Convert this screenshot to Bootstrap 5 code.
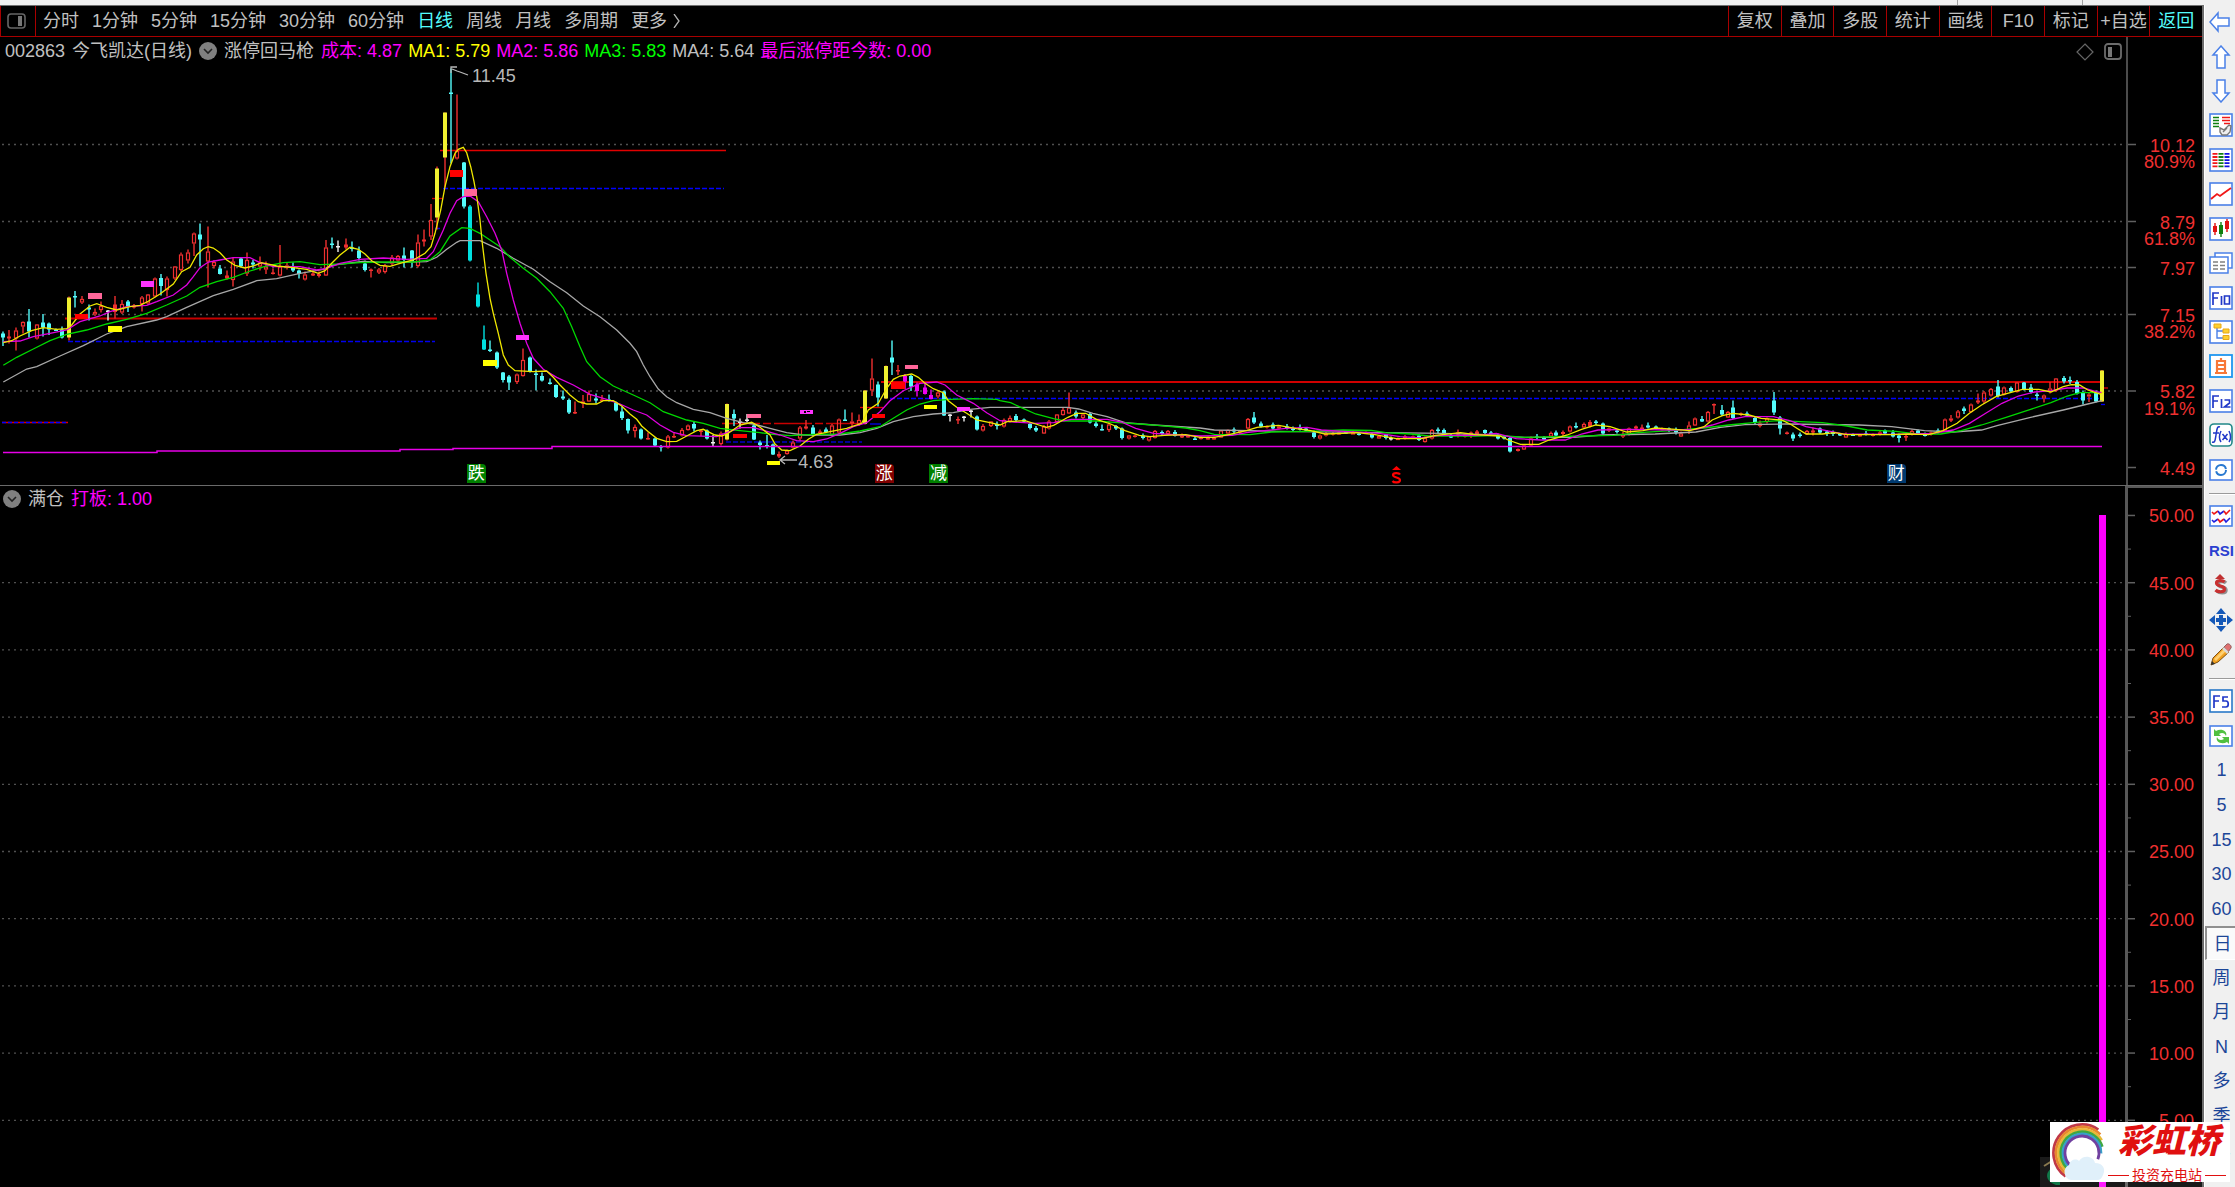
<!DOCTYPE html>
<html lang="zh-CN">
<head>
<meta charset="utf-8">
<meta name="viewport" content="width=device-width, initial-scale=1">
<title>今飞凯达 002863 日线</title>
<link rel="stylesheet" href="https://cdn.jsdelivr.net/npm/bootstrap@5.3.0/dist/css/bootstrap.min.css">
<style>
  body { background: #f0f0f0; font-family: "Liberation Sans", "Noto Sans CJK SC", sans-serif; font-size: 18px; line-height: 28px; color: #c0c0c0; }
  svg { display: block; }
  .top-strip { height: 5px; }
  .strip-a { flex: 1959 1 0; border-right: 1px solid #a0a0a0; }
  .strip-b { flex: 124 1 0; border-right: 1px solid #a0a0a0; }
  .strip-c { flex: 152 1 0; }
  .terminal { background: #000; border-right: 2px solid #6c6c6c; border-top: 1px solid #707070; }
  .menu-bar { height: 31px; border-bottom: 1px solid #a80000; }
  .layout-btn { width: 36px; border: 0; border-left: 1px solid #a80000; border-right: 1px solid #a80000; background: none; padding: 0 0 0 6px; }
  .period-list { gap: 13px; padding-left: 7px; }
  .flat { background: none; border: 0; padding: 0; color: #c0c0c0; text-decoration: none; white-space: nowrap; }
  .flat.on { color: #54fcfc; }
  .tool-list { width: 474px; }
  .tool-list .flat { flex: 1 1 0; min-width: 0; border-left: 1px solid #a80000; text-align: center; }
  .legend-row { height: 28px; padding-left: 5px; gap: 7px; white-space: nowrap; }
  .legend-row.sub { padding-left: 3px; height: 26px; }
  .legend-vals { gap: 6px; }
  .mg { color: #f0f; } .ye { color: #ff0; } .gr { color: #0f0; }
  .toggle-dot { width: 18px; height: 18px; border: 0; padding: 0; border-radius: 50%; background: #808080; }
  .plot-main { height: 420px; }
  .pane-main { border-bottom: 1px solid #6a6a6a; }
  .axis { width: 76px; border-left: 2px solid #4c4c4c; }
  .axis.low { border-left: 3px solid #585858; border-top: 2px solid #585858; width: 77px; }
  .axis text { fill: #f03030; font-size: 18px; text-anchor: end; }
  .pin { position: absolute; font-size: 17px; line-height: 19px; height: 19px; width: 19px; text-align: center; color: #fff; border-radius: 0 4px 0 0; overflow: hidden; }
  .note { position: absolute; line-height: 20px; color: #b8b8b8; }
  .pane-tools { position: absolute; top: 6px; right: 4px; gap: 10px; }
  .dock { width: 31px; border-left: 1px solid #fff; color: #1c4698; overflow: hidden; }
  .dock-group { padding-left: 4px; }
  .dock-group.g-a { height: 482px; }
  .dock-group.g-b { height: 173px; }
  .dock-group.g-c { height: 484px; }
  .dock-line { height: 2px; margin: 6px 0 4px 4px; background: #9a9a9a; border-bottom: 1px solid #fff; }
  .dock-btn { border: 0; background: none; padding: 0; width: 25px; height: 24px; line-height: 24px; color: #1c4698; text-align: center; white-space: nowrap; }
  .dock-btn.on { width: 30px; height: 34px; margin: -5px 0 -5px -4px; background: #fafafa; border-left: 2px solid #909090; border-top: 2px solid #909090; border-bottom: 1px solid #fff; padding-left: 3px; }
  .rsi { font-weight: 700; font-size: 15px; color: #2b3fd0; }
  .brand-box { position: fixed; right: 5px; bottom: 5px; width: 180px; height: 60px; background: #fff; color: #e01010; }
  .brand-back { position: fixed; right: 33px; bottom: 0; width: 162px; height: 30px; background: rgba(255,255,255,.1); }
  .brand-name { font-size: 34px; line-height: 38px; font-weight: 900; font-style: italic; }
  .brand-sub { font-size: 14px; line-height: 16px; gap: 3px; margin-top: 7px; }
  .brand-sub i { height: 1px; background: #e01010; flex: 1; }
</style>
<script src="https://cdn.jsdelivr.net/npm/bootstrap@5.3.0/dist/js/bootstrap.bundle.min.js"></script>
</head>
<body class="vh-100 d-flex flex-column overflow-hidden">
<div class="top-strip d-flex flex-shrink-0"><span class="strip-a"></span><span class="strip-b"></span><span class="strip-c"></span></div>
<div class="d-flex flex-grow-1 overflow-hidden">
  <main class="terminal d-flex flex-column flex-grow-1 overflow-hidden">
    <nav class="menu-bar d-flex flex-shrink-0 align-items-stretch">
      <button class="layout-btn" type="button" aria-label="布局"><svg width="20" height="16" viewBox="0 0 20 16"><rect x="1" y="1" width="17" height="14" rx="3" fill="none" stroke="#666" stroke-width="1.6"/><rect x="11" y="3" width="4" height="10" fill="#777"/></svg></button>
      <div class="period-list d-flex align-items-center flex-grow-1">
        <a class="flat" href="#">分时</a><a class="flat" href="#">1分钟</a><a class="flat" href="#">5分钟</a><a class="flat" href="#">15分钟</a><a class="flat" href="#">30分钟</a><a class="flat" href="#">60分钟</a><a class="flat on" href="#">日线</a><a class="flat" href="#">周线</a><a class="flat" href="#">月线</a><a class="flat" href="#">多周期</a><a class="flat d-flex align-items-center" href="#">更多<svg width="16" height="14" viewBox="0 0 16 14"><path d="M7 0l5 7-5 7" fill="none" stroke="#b0b0b0" stroke-width="1.3"/></svg></a>
      </div>
      <div class="tool-list d-flex">
        <button class="flat" type="button">复权</button><button class="flat" type="button">叠加</button><button class="flat" type="button">多股</button><button class="flat" type="button">统计</button><button class="flat" type="button">画线</button><button class="flat" type="button">F10</button><button class="flat" type="button">标记</button><button class="flat" type="button">+自选</button><button class="flat on" type="button">返回</button>
      </div>
    </nav>

    <section class="pane-main d-flex flex-shrink-0">
      <div class="flex-grow-1 position-relative overflow-hidden">
        <div class="legend-row d-flex align-items-center">
          <span>002863</span><span>今飞凯达(日线)</span>
          <button class="toggle-dot" type="button" aria-label="指标菜单"><svg width="18" height="18" viewBox="0 0 18 18"><path d="M5 7l4 4 4-4" fill="none" stroke="#222" stroke-width="1.6"/></svg></button>
          <span>涨停回马枪</span>
          <div class="legend-vals d-flex"><span class="mg">成本: 4.87</span><span class="ye">MA1: 5.79</span><span class="mg">MA2: 5.86</span><span class="gr">MA3: 5.83</span><span>MA4: 5.64</span><span class="mg">最后涨停距今数: 0.00</span></div>
        </div>
        <div class="pane-tools d-flex">
          <svg width="18" height="18" viewBox="0 0 18 18"><path d="M9 1l8 8-8 8-8-8z" fill="none" stroke="#666" stroke-width="1.2"/></svg>
          <svg width="18" height="18" viewBox="0 0 18 18"><rect x="1" y="1" width="16" height="15" rx="3" fill="none" stroke="#6c6c6c" stroke-width="1.8"/><rect x="4" y="4" width="4" height="10" fill="#777"/></svg>
        </div>
        <svg id="kline" class="plot-main w-100" viewBox="0 65 2126 420" preserveAspectRatio="none"></svg>
        <span class="note" style="left:22.2%;top:29px">11.45</span>
        <span class="note" style="left:37.55%;top:415px">4.63</span>
        <span class="pin" style="left:21.95%;top:427px;background:#008000">跌</span>
        <span class="pin" style="left:41.15%;top:427px;background:#800000">涨</span>
        <span class="pin" style="left:43.7%;top:427px;background:#008000">减</span>
        <span class="pin" style="left:88.75%;top:427px;background:#003a70">财</span>
      </div>
      <svg id="axisMain" class="axis flex-shrink-0" style="height:448px"></svg>
    </section>

    <section class="d-flex flex-grow-1 overflow-hidden">
      <div class="flex-grow-1 d-flex flex-column overflow-hidden">
        <div class="legend-row sub d-flex align-items-center flex-shrink-0">
          <button class="toggle-dot" type="button" aria-label="指标菜单"><svg width="18" height="18" viewBox="0 0 18 18"><path d="M5 7l4 4 4-4" fill="none" stroke="#222" stroke-width="1.6"/></svg></button>
          <span>满仓</span><span class="mg">打板: 1.00</span>
        </div>
        <svg id="signal" class="w-100 flex-grow-1" viewBox="0 512 2125 675" preserveAspectRatio="none"></svg>
      </div>
      <svg id="axisSub" class="axis low flex-shrink-0 h-100"></svg>
    </section>
  </main>

  <aside class="dock flex-shrink-0">
    <div class="dock-group g-a d-flex flex-column justify-content-around">
      <button class="dock-btn" type="button" aria-label="后退"><svg width="24" height="24" viewBox="0 0 24 24"><path d="M1 12L9 3v5h11v8H9v5z" fill="#fff" stroke="#4a80e8" stroke-width="1.5"/></svg></button>
      <button class="dock-btn" type="button" aria-label="上翻"><svg width="24" height="24" viewBox="0 0 24 24"><path d="M12 1l8 9h-4v13H8V10H4z" fill="#fff" stroke="#4a80e8" stroke-width="1.5"/></svg></button>
      <button class="dock-btn" type="button" aria-label="下翻"><svg width="24" height="24" viewBox="0 0 24 24"><path d="M12 23l8-9h-4V1H8v13H4z" fill="#fff" stroke="#4a80e8" stroke-width="1.5"/></svg></button>
      <button class="dock-btn" type="button" aria-label="报价设置"><svg width="24" height="24" viewBox="0 0 24 24"><rect x="1" y="1" width="22" height="22" fill="#fff" stroke="#4a80e8" stroke-width="1.6"/><path d="M4 4.500h6M4 7.500h6M4 10.500h6M4 13.500h6" stroke="#108010" stroke-width="1.6"/><path d="M13 4.500h8M13 7.500h8M15 10.500h6" stroke="#f01818" stroke-width="1.6"/><path d="M11 15l4 2 5-5 2 1-1 6-3 3h-5l-2-3z" fill="#eee" stroke="#777" stroke-width="1.4"/><path d="M14 19l4-4" fill="none" stroke="#777" stroke-width="1.3"/></svg></button>
      <button class="dock-btn" type="button" aria-label="行情列表"><svg width="24" height="24" viewBox="0 0 24 24"><rect x="1" y="1" width="22" height="22" fill="#fff" stroke="#4a80e8" stroke-width="1.6"/><g stroke-width="5" stroke-dasharray="1.800 1.300"><path d="M6 5v15" stroke="#f01818"/><path d="M12 5v15" stroke="#108010"/><path d="M18 5v15" stroke="#1010e0"/></g></svg></button>
      <button class="dock-btn" type="button" aria-label="分时走势"><svg width="24" height="24" viewBox="0 0 24 24"><rect x="1" y="1" width="22" height="22" fill="#fff" stroke="#4a80e8" stroke-width="1.6"/><path d="M2 17l6-5 3 2 4-3 7-5" fill="none" stroke="#f01818" stroke-width="1.8"/></svg></button>
      <button class="dock-btn" type="button" aria-label="K线"><svg width="24" height="24" viewBox="0 0 24 24"><rect x="1" y="1" width="22" height="22" fill="#fff" stroke="#4a80e8" stroke-width="1.6"/><path d="M6 6v12M18 2v13" stroke="#e01010" stroke-width="1.4"/><path d="M12 5v15" stroke="#108010" stroke-width="1.4"/><path d="M4 9h4v6H4zM16 4h4v8h-4z" fill="#e01010"/><path d="M10 8h4v9h-4z" fill="#108010"/></svg></button>
      <button class="dock-btn" type="button" aria-label="窗口"><svg width="24" height="24" viewBox="0 0 24 24"><path d="M6 2h17v15H6z" fill="#fff" stroke="#4a80e8" stroke-width="1.5"/><path d="M1 6h18v16H1z" fill="#fff" stroke="#4a80e8" stroke-width="1.5"/><path d="M4 11h5M11 11h5M4 14.500h5M11 14.500h5M4 18h5M11 18h5" stroke="#808080" stroke-width="1.6"/></svg></button>
      <button class="dock-btn" type="button" aria-label="F10"><svg width="24" height="24" viewBox="0 0 24 24"><rect x="1" y="1" width="22" height="22" fill="#fff" stroke="#4a80e8" stroke-width="1.6"/><path d="M4 19V7h6M4 12h5M12.500 10v9M15.500 10h5v8h-5z" fill="none" stroke="#2038c8" stroke-width="1.7"/></svg></button>
      <button class="dock-btn" type="button" aria-label="板块树"><svg width="24" height="24" viewBox="0 0 24 24"><rect x="1" y="1" width="22" height="22" fill="#fff" stroke="#4a80e8" stroke-width="1.6"/><path d="M8 7v11h6M8 11h6" fill="none" stroke="#4a80e8" stroke-width="1.4"/><path d="M5 4h7v4H5zM14 9h6v4h-6zM14 15.500h6v4h-6z" fill="#fcd030" stroke="#e8a818"/></svg></button>
      <button class="dock-btn" type="button" aria-label="自选"><svg width="24" height="24" viewBox="0 0 24 24"><rect x="1" y="1" width="22" height="22" fill="#fff" stroke="#1e96f0" stroke-width="1.8"/><path d="M12 4v3M8 7h8v12H8zM8 11h8M8 15h8M6 19h12" fill="none" stroke="#f87838" stroke-width="2.200"/></svg></button>
      <button class="dock-btn" type="button" aria-label="F12"><svg width="24" height="24" viewBox="0 0 24 24"><rect x="1" y="1" width="22" height="22" fill="#fff" stroke="#4a80e8" stroke-width="1.6"/><path d="M4 19V7h6M4 12h5M12.500 10v9M15.500 11h5v3l-5 4h6" fill="none" stroke="#2038c8" stroke-width="1.7"/></svg></button>
      <button class="dock-btn" type="button" aria-label="公式"><svg width="24" height="24" viewBox="0 0 24 24"><rect x="1" y="1" width="22" height="22" rx="4" fill="#fff" stroke="#208888" stroke-width="1.6"/><path d="M11 4c-3-1-3 2-4 8s-1 8-4 7M4 10h6M12 8c-2 4-2 8 0 11M20 8c2 4 2 8 0 11M13.500 11l5 6M18.500 11l-5 6" fill="none" stroke="#2038c8" stroke-width="1.5"/></svg></button>
      <button class="dock-btn" type="button" aria-label="循环"><svg width="24" height="24" viewBox="0 0 24 24"><rect x="1" y="2" width="22" height="20" fill="#fff" stroke="#4a80e8" stroke-width="1.6"/><circle cx="12" cy="12" r="5" fill="none" stroke="#2878d0" stroke-width="2" stroke-dasharray="14 1.700"/></svg></button>
    </div>
    <div class="dock-line"></div>
    <div class="dock-group g-b d-flex flex-column justify-content-around">
      <button class="dock-btn" type="button" aria-label="多图"><svg width="24" height="24" viewBox="0 0 24 24"><rect x="1" y="2" width="22" height="20" fill="#fff" stroke="#4a80e8" stroke-width="1.6"/><path d="M3 8l2 2 4-3" fill="none" stroke="#f01818" stroke-width="1.6"/><path d="M9 7l2 3 4-3" fill="none" stroke="#2020e0" stroke-width="1.6"/><path d="M15 7l2 3 4-4" fill="none" stroke="#f01818" stroke-width="1.6"/><path d="M3 16l2 2 4-3" fill="none" stroke="#2020e0" stroke-width="1.6"/><path d="M9 15l2 3 4-3" fill="none" stroke="#f01818" stroke-width="1.6"/><path d="M15 15l2 3 4-4" fill="none" stroke="#2020e0" stroke-width="1.6"/></svg></button>
      <button class="dock-btn rsi" type="button">RSI</button>
      <button class="dock-btn" type="button" aria-label="资金"><svg width="24" height="24" viewBox="0 0 24 24"><path d="M17 10c-2-2-8-2-8 1 0 4 8 2 8 6s-7 3-9 1" fill="none" stroke="#909090" stroke-width="3.500"/><path d="M6 6l5-5 5 5z" fill="#c03030"/><path d="M15.500 9c-2-2-8-2-8 1 0 4 8 2 8 6s-7 3-9 1" fill="none" stroke="#c83030" stroke-width="3.200"/></svg></button>
      <button class="dock-btn" type="button" aria-label="移动"><svg width="24" height="24" viewBox="0 0 24 24"><path d="M12 0l5 6H7zM12 24l5-6H7zM0 12l6-5v10zM24 12l-6-5v10z" fill="#1458b8"/><path d="M12 7v10M7 12h10" stroke="#1458b8" stroke-width="4"/></svg></button>
      <button class="dock-btn" type="button" aria-label="画笔"><svg width="24" height="24" viewBox="0 0 24 24"><path d="M2 22l2-7L15 4l5 5L9 19z" fill="#f0a020" stroke="#805010"/><path d="M5 16L16 5l2 2L7 18z" fill="#ffd070"/><path d="M15 4l3-3c2-1 5 2 4 4l-3 4z" fill="#e07070" stroke="#906060"/><path d="M14 5l5 5" stroke="#d8d8d8" stroke-width="2.500"/><path d="M2 22l1-4 3 3z" fill="#333"/></svg></button>
    </div>
    <div class="dock-line"></div>
    <div class="dock-group g-c d-flex flex-column justify-content-around">
      <button class="dock-btn" type="button" aria-label="F5"><svg width="24" height="24" viewBox="0 0 24 24"><rect x="1" y="1" width="22" height="22" fill="#fff" stroke="#2878c8" stroke-width="1.6"/><path d="M5 19V7h6M5 12h5M19 8h-5v4h3c3 0 3 6 0 6h-4" fill="none" stroke="#2038c8" stroke-width="1.7"/></svg></button>
      <button class="dock-btn" type="button" aria-label="刷新"><svg width="24" height="24" viewBox="0 0 24 24"><rect x="1" y="2" width="22" height="20" fill="#fff" stroke="#4a80e8" stroke-width="1.6"/><path d="M5 5v7h7l-2-2c3-2 6-1 7 2 2-5-5-8-10-5z" fill="#50c040"/><path d="M20 20v-7h-7l2 2c-3 2-6 1-7-2-2 5 5 8 10 5z" fill="#50c040"/></svg></button>
      <button class="dock-btn" type="button">1</button>
      <button class="dock-btn" type="button">5</button>
      <button class="dock-btn" type="button">15</button>
      <button class="dock-btn" type="button">30</button>
      <button class="dock-btn" type="button">60</button>
      <button class="dock-btn on" type="button">日</button>
      <button class="dock-btn" type="button">周</button>
      <button class="dock-btn" type="button">月</button>
      <button class="dock-btn" type="button">N</button>
      <button class="dock-btn" type="button">多</button>
      <button class="dock-btn" type="button">季</button>
      <button class="dock-btn" type="button">年</button>
    </div>
  </aside>
</div>

<div class="brand-back"><svg width="20" height="30" viewBox="0 0 20 30"><path d="M4 9l8-5" stroke="#8a7a50" stroke-width="2"/><path d="M12 11c-8 5-6 14 4 17h4V11z" fill="#107848"/></svg></div>
<div class="brand-box d-flex">
  <svg width="58" height="60" viewBox="0 0 58 60" class="flex-shrink-0">
    <g fill="none" stroke-width="2.800" transform="rotate(125 32 31)">
      <circle cx="32" cy="31" r="28.500" stroke="#c03848" pathLength="360" stroke-dasharray="180 360"/>
      <circle cx="32" cy="31" r="26" stroke="#e88830" pathLength="360" stroke-dasharray="190 360"/>
      <circle cx="32" cy="31" r="23.500" stroke="#e8b838" pathLength="360" stroke-dasharray="202 360"/>
      <circle cx="32" cy="31" r="21.200" stroke="#40a840" pathLength="360" stroke-dasharray="218 360"/>
      <circle cx="32" cy="31" r="19" stroke="#38a0c8" pathLength="360" stroke-dasharray="236 360"/>
      <circle cx="32" cy="31" r="17" stroke="#7040a0" pathLength="360" stroke-dasharray="256 360"/>
    </g>
    <path d="M21 58a8 8 0 0 1-2-15c1-5 7-7 10-4 4-7 15-5 16 2 8 0 11 6 8 12-1 3-3 5-6 5z" fill="#e0f0fa"/>
  </svg>
  <div class="flex-grow-1 overflow-hidden">
    <div class="brand-name text-center">彩虹桥</div>
    <div class="brand-sub d-flex align-items-center pe-1"><i></i>投资充电站<i></i></div>
  </div>
</div>

<script>
// Session blocks: origin x, origin y, x scale, y scale, candles.
// A candle is: centre, high, body top, body bottom, low, kind.
const blocks = [
 {o:[0,200,3,3], k:`10 395 400 412 438 c;28 390 410 416 430 R;47 382 392 416 452 r;69 365 366 380 400 r;88 327 364 395 413 c;110 372 374 415 418 r;128 342 367 382 410 c;146 368 370 388 405 c;168 386 388 390 392 c;187 380 388 412 416 c;208 290 292 412 422 y;226 273 288 290 322 c;245 288 297 307 312 r;267 313 323 328 362 c;286 325 336 344 348 r;304 305 318 330 338 r;325 330 332 334 362 w;344 288 314 336 355 R;366 300 312 338 342 r;385 300 305 318 336 c;403 312 316 322 326 R;425 288 292 312 334 r;443 282 284 310 314 r;465 233 236 290 292 r;484 222 234 258 286 c;502 230 236 270 290 r;524 198 200 235 240 r;542 157 163 210 215 r;565 148 158 182 190 r;583 98 100 130 168 r;601 70 103 118 200 c;624 80 154 184 262 r;641 180 186 198 206 r;659 195 206 222 224 c;681 212 226 236 238 R;700 172 184 240 260 r;722 172 175 198 203 c;740 158 180 220 228 r;759 180 188 194 205 c;781 170 188 200 212 r;799 184 200 208 222 r;820 205 218 221 224 R;839 135 200 226 230 r;860 188 196 202 208 r;880 188 200 212 216 c;898 208 212 222 236 c;915 215 224 238 242 r;938 210 220 226 228 R;956 214 222 228 232 R;979 120 142 226 228 r;997 112 130 134 145 c;1015 122 138 140 156 w;1037 116 134 142 148 R;1055 125 142 144 155 c;1077 140 152 174 182 c;1096 182 190 210 214 c;1114 205 208 210 232 R;1136 204 208 218 222 r;1154 192 196 216 220 r;1176 165 172 190 196 r;1195 165 168 182 190 r;1213 143 166 180 202 c;1235 150 152 184 202 c;1253 103 128 198 202 r;1271 88 118 124 140 R;1294 12 60 110 120 r`},
 {o:[400,50,3,3], k:`112 350 355 502 538 y;134 187 188 322 412 y;152 55 128 132 340 c;171 133 303 326 328 r;193 336 338 470 475 c;211 465 470 632 634 C;233 697 733 770 772 C;251 827 868 898 900 C;269 872 898 902 906 c;292 904 908 952 957 c;310 966 968 990 997 c;328 975 980 997 1020 c;350 970 974 996 1002 r;370 895 930 978 980 r;391 920 922 965 967 c;409 958 970 974 1022 c;427 967 978 992 994 c;449 985 998 1001 1004 c;467 1003 1005 1041 1044 c;489 1022 1040 1046 1050 c;508 1046 1050 1088 1092 c;526 1055 1086 1091 1092 R;548 1035 1055 1060 1074 r;566 1022 1032 1054 1056 r;589 1030 1046 1052 1060 c;607 1035 1048 1052 1055 R;626 1034 1048 1052 1055 c;648 1055 1058 1082 1084 c;665 1070 1084 1104 1110 c;684 1105 1107 1142 1151 c;706 1124 1131 1143 1163 r;724 1136 1138 1165 1168 c;745 1148 1164 1167 1168 R;765 1162 1165 1186 1188 c;782 1185 1188 1192 1204 c;805 1155 1160 1193 1195 r;823 1148 1158 1163 1164 R;845 1134 1140 1156 1160 r;863 1124 1126 1140 1142 r;882 1115 1122 1136 1144 c;904 1140 1142 1146 1158 R;922 1138 1142 1166 1168 c;940 1155 1176 1178 1188 w;962 1145 1151 1182 1187 r;980 1060 1062 1168 1172 y;1002 1078 1092 1106 1128 c;1021 1105 1115 1117 1135 w;1040 1092 1108 1110 1118 w;1062 1120 1126 1168 1170 c`},
 {o:[600,320,3,3], k:`480 362 367 375 388 c;502 345 375 378 385 c;520 370 373 403 405 c;538 395 402 410 414 R;561 388 391 402 404 r;580 362 368 382 386 r;601 318 322 355 362 r;619 300 320 326 328 R;638 315 322 342 348 c;659 328 334 338 342 R;677 323 328 336 338 c;696 312 316 346 350 r;718 295 298 338 342 r;736 268 298 300 300 c;757 278 305 310 320 r;776 283 300 312 318 r;795 210 211 312 314 y;817 115 176 212 228 r;835 184 193 232 260 c;858 136 138 235 237 y;876 62 112 128 165 c;894 135 150 155 165 R;915 162 168 185 207 m;934 165 168 200 213 c;952 188 193 213 230 m;974 188 203 222 224 m;992 208 225 237 238 m;1015 212 218 230 235 r;1033 212 215 286 288 c;1051 282 284 286 304 w;1074 290 297 302 312 R;1092 288 290 292 304 w;1114 270 272 276 292 w;1132 287 290 328 332 c;1150 312 318 332 335 r;1172 303 305 318 321 r;1190 305 312 318 328 c`},
 {o:[1000,360,2.8,3], k:`12 175 180 200 203 r;29 166 174 184 188 r;46 162 168 180 184 c;67 175 178 184 188 c;84 188 192 204 208 c;101 198 204 212 216 c;122 195 200 220 222 r;138 180 184 206 208 r;160 162 164 186 190 r;176 142 150 165 167 r;193 98 142 160 162 r;214 152 158 170 176 c;231 160 163 174 178 r;252 158 162 188 190 c;268 183 190 198 203 c;285 193 207 210 212 c;306 185 193 210 216 r;324 195 198 206 210 c;341 203 205 234 239 c;361 225 227 236 238 r;378 225 226 230 232 R;399 220 226 234 238 c;416 228 230 241 244 r;433 210 213 234 236 r;453 212 216 222 225 c;470 210 213 222 224 r;491 210 216 228 230 c;509 220 228 232 234 R;525 226 228 231 232 R;545 230 235 238 239 c;562 228 231 236 238 r;583 230 232 237 238 r;600 230 232 236 238 r;618 210 212 232 234 r;638 208 210 220 222 r;655 203 208 215 222 c;672 210 213 218 222 R;693 174 177 206 208 r;710 156 172 188 192 c;730 184 190 200 203 c;747 196 198 202 205 R;765 188 194 206 210 c;782 196 200 206 208 r;803 192 200 206 208 c;820 200 204 210 213 c;840 193 202 208 212 c;857 202 206 212 215 c;878 212 218 231 235 c;895 224 226 236 238 r;912 216 220 226 230 r;932 216 219 224 226 R;949 215 218 222 224 r;970 212 216 220 222 c;987 213 217 219 221 r;1004 216 220 222 226 c;1024 214 216 220 222 r;1042 218 222 233 235 c;1062 226 228 235 237 r;1080 222 224 234 238 c;1094 230 234 236 242 w;1115 232 234 238 240 r;1135 225 230 236 238 r;1155 226 230 234 236 r;1172 222 226 240 243 c;1189 230 234 246 248 r;1210 207 210 236 238 r;1226 202 208 210 220 c;1243 205 210 220 222 c;1264 222 228 230 234 c;1281 208 218 222 232 r;1302 220 224 230 232 r;1319 214 218 220 234 R;1336 210 214 222 224 R;1357 208 210 219 222 c;1374 213 217 221 224 c;1395 220 226 235 238 c;1412 225 231 236 238 c`},
 {o:[1500,360,2.45,3], k:`24 228 234 274 278 c;43 265 267 273 275 R;58 252 256 268 270 r;75 230 236 256 260 r;91 222 230 234 240 c;107 228 232 238 240 c;124 215 219 230 232 r;138 212 218 226 228 c;154 212 216 222 228 R;172 196 200 214 218 r;187 188 198 203 206 c;205 188 192 202 206 r;220 180 186 200 202 R;234 180 185 189 195 c;253 188 190 220 224 c;267 203 206 212 216 r;286 208 212 216 220 c;301 216 222 230 234 r;316 202 206 222 226 r;333 196 200 206 210 R;348 193 202 206 208 R;363 188 196 202 206 c;381 196 199 206 210 c;396 202 206 210 212 R;414 202 206 210 216 c;430 203 208 218 224 c;444 215 220 229 231 r;462 184 196 212 222 r;477 172 176 196 198 r;495 168 177 184 186 c;510 153 156 184 188 r;525 130 132 134 162 R;543 135 150 164 168 c;558 153 156 172 174 r;572 122 142 174 177 c;590 158 160 164 168 R;606 155 160 166 170 c;624 170 174 187 195 c;638 182 190 198 203 r;654 172 176 186 190 r;672 96 122 158 165 c;687 168 173 206 224 c;704 215 218 222 224 R;719 218 223 235 243 c;734 218 224 228 232 c;752 210 213 222 225 r;768 203 212 218 226 R;785 203 206 218 222 c;800 210 214 218 228 c;815 212 216 222 228 c;833 220 222 226 228 c;848 218 222 232 234 r;866 220 223 226 228 c;881 222 225 228 230 R;896 213 220 224 226 c;915 220 223 226 229 R;930 212 218 222 226 r;944 208 212 220 224 c;962 210 218 230 233 c;977 220 226 234 248 c;995 222 228 231 243 R;1010 208 213 222 226 r;1025 208 211 222 224 c;1042 218 222 228 230 c;1057 214 218 224 226 R;1072 206 212 216 220 c;1090 176 178 212 214 r;1105 165 175 180 186 r;1123 150 154 172 175 r;1138 140 145 153 162 c;1153 130 133 156 158 r;1171 100 122 128 132 R;1186 93 97 125 132 r;1204 84 87 106 110 r;1219 60 80 108 112 c;1234 80 83 104 106 r;1252 80 84 94 98 c;1267 66 68 96 98 r;1285 66 68 88 92 c;1300 72 82 96 100 c;1315 98 104 108 122 c;1333 103 106 115 128 r;1348 66 86 96 100 r;1362 54 56 92 96 r;1381 48 54 65 70 c;1396 50 60 65 72 c;1414 60 66 100 104 c;1429 92 98 122 134 c;1443 98 104 110 126 r;1461 92 98 124 128 c;1476 30 32 124 126 y`}
];
// Moving averages, one point list per session block.
const averages = [
 ['#a8a8a8', ['10,546 80,507 110,500 180,468 250,437 320,402 380,380 470,360 500,350 560,322 640,287 700,268 770,242 830,236 900,220 970,208 1000,195 1090,184 1160,188 1280,185 1310,172 1340,148 1370,127','180,572 240,572 290,595 340,625 400,658 450,695 500,728 550,768 600,800 650,840 690,880 710,905 730,945 750,980 775,1017 800,1040 830,1058 880,1078 930,1088 980,1105 1030,1118 1060,1122','510,325 560,338 610,345 720,345 780,338 830,325 880,305 940,290 1000,282 1060,278 1110,268 1170,262','60,142 190,142 220,147 260,160 300,170 350,188 430,195 560,204 600,210 780,214 1080,218 1240,220 1390,225 1430,230','60,232 180,232 250,225 380,222 480,216 540,202 600,194 700,192 880,195 960,200 1040,212 1110,216 1180,210 1220,196 1300,172 1380,150 1440,132 1475,122']],
 ['#00d800', ['10,496 50,472 100,447 150,422 200,403 260,390 320,372 380,358 440,340 500,315 560,288 600,262 650,245 700,232 750,213 800,198 850,188 900,185 960,194 1020,192 1080,188 1160,186 1240,186 1290,180 1320,155 1350,108','185,533 210,535 240,550 300,590 330,622 370,655 410,685 450,725 490,775 515,830 540,890 560,935 600,980 640,1008 700,1035 750,1058 790,1085 860,1110 910,1120 960,1135 1020,1142 1080,1148','510,342 570,347 640,343 720,342 780,333 840,320 880,295 920,270 960,252 1000,242 1050,238 1120,236 1190,238','0,122 30,128 60,143 100,162 150,176 180,183 270,183 330,188 390,192 450,197 520,204 560,212 600,223 700,224 760,216 860,214 960,210 1040,211 1080,218 1150,222 1200,228 1330,228 1400,226','60,232 200,228 280,226 340,218 420,212 500,204 560,195 620,188 680,182 790,188 850,198 900,210 970,214 1020,222 1080,222 1130,212 1180,195 1240,172 1300,148 1350,128 1390,108 1420,98 1475,98']],
 ['#e000e0', ['10,425 60,423 100,410 150,400 200,390 240,365 300,348 330,335 380,320 440,316 470,305 520,285 560,255 580,230 600,203 625,186 660,180 700,173 750,173 780,188 820,200 900,200 950,210 980,205 1020,190 1080,178 1150,174 1220,178 1280,175 1300,155 1330,90','150,490 170,452 190,440 210,438 235,455 260,500 285,550 305,600 320,670 340,750 360,820 380,880 400,925 430,958 470,982 520,1005 570,1033 620,1048 660,1062 700,1080 740,1095 780,1125 820,1147 860,1157 950,1160 980,1148 1020,1133 1060,1133','480,328 540,345 590,362 640,365 680,357 720,340 760,320 800,308 840,275 870,242 910,212 960,190 1010,186 1035,195 1070,225 1120,250 1160,278','0,182 40,186 100,190 150,188 200,178 300,178 340,186 380,205 430,220 500,225 560,228 650,226 690,218 740,212 800,205 860,202 900,210 960,214 1060,220 1120,230 1180,234 1230,226 1330,226 1390,220','40,236 100,240 160,240 200,222 240,210 320,208 420,210 480,208 520,195 560,180 600,170 670,170 710,182 750,200 800,212 840,222 960,223 1060,220 1110,210 1150,190 1190,160 1230,130 1270,108 1310,96 1350,92 1390,84 1430,84 1460,95 1475,98']],
 ['#f0e800', ['10,428 35,422 60,408 95,392 130,383 170,388 200,386 215,375 240,342 270,318 290,311 320,322 350,330 390,320 420,316 445,304 480,282 520,252 545,215 570,202 590,165 610,146 625,140 640,144 660,158 680,180 705,196 735,204 760,198 785,188 830,198 880,203 920,208 955,220 975,212 995,190 1020,165 1050,142 1075,148 1095,162 1115,182 1140,196 1170,199 1200,190 1240,180 1275,160 1293,140','105,550 122,480 135,410 150,350 165,310 175,298 190,292 200,308 212,350 222,395 232,450 240,510 247,580 258,670 270,745 280,790 295,850 310,915 325,945 345,962 400,965 440,963 460,982 480,1005 510,1035 535,1055 560,1062 590,1062 610,1052 640,1052 665,1068 690,1092 710,1108 725,1128 745,1145 770,1165 800,1175 830,1174 860,1158 890,1142 910,1138 945,1155 965,1158 985,1150 1020,1125','455,307 480,322 510,345 525,372 545,390 570,392 600,378 625,358 650,343 690,335 740,325 785,310 805,270 835,250 860,205 880,178 900,168 935,162 955,172 975,190 1000,206 1030,218 1045,242 1070,262 1100,280 1130,300 1170,308','0,195 20,185 70,182 100,192 130,202 150,196 190,172 215,160 240,160 270,178 310,192 350,212 390,226 420,230 460,226 520,224 560,232 600,232 640,224 690,212 720,202 780,196 830,206 870,212 910,222 960,220 1000,218 1050,224 1110,236 1180,236 1220,226 1290,218 1330,224','0,228 20,240 50,253 95,253 120,240 165,225 200,208 235,195 270,200 310,216 350,212 380,204 430,208 465,212 500,200 520,180 545,167 570,160 610,165 640,175 690,180 715,195 750,222 790,222 820,218 850,224 960,224 1000,222 1050,224 1085,212 1120,190 1150,160 1180,135 1215,110 1250,98 1280,88 1320,88 1350,96 1380,80 1400,74 1420,75 1440,90 1470,102 1480,95']]
];
const ink = {r:'#f03030', R:'#f03030', c:'#54fcfc', C:'#00e0e0', y:'#f0f030', w:'#f0f0f0', m:'#f000f0'};
const rect = (x, y, w, h, f) => `<rect x="${x}" y="${y}" width="${w}" height="${h}" fill="${f}"/>`;
const seg = (x1, x2, y, c, w, extra = '') => `<path d="M${x1} ${y}H${x2}" stroke="${c}" stroke-width="${w}" fill="none" ${extra}/>`;
const dots = 'stroke-dasharray="2 4"', dash = 'stroke-dasharray="5 2"';
let out = '';

for (const y of [144.5, 221.5, 267.5, 314.5, 391]) out += seg(2, 2126, y, '#505050', 1.3, dots);

// Limit-up price levels and their stops.
out += seg(65, 437, 318.5, '#c80000', 2) + seg(68, 435, 341.5, '#0000f0', 1.5, dash);
out += seg(2, 68, 422.5, '#e00000', 1.3) + seg(2, 68, 422.5, '#0000ff', 1.3, 'stroke-dasharray="4 2"');
out += seg(440, 726, 150.5, '#e00000', 1.7) + seg(443, 724, 188.5, '#0000ff', 1.5, dash);
out += seg(432, 443, 198.5, '#d00000', 1.3) + seg(435, 440, 228.5, '#0000e0', 1.5);
out += seg(722, 862, 423.5, '#c80000', 1.6, 'stroke-dasharray="38 3 8 3"') + seg(726, 862, 442, '#0000c8', 1.5, dash);
out += seg(860, 883, 407.5, '#e00000', 1.3) + seg(870, 881, 424, '#0000d0', 1.5);
out += seg(881, 2102, 382, '#d00000', 1.8) + seg(890, 2102, 398.5, '#0000ff', 1.6, dash);
out += seg(2102, 2108, 388, '#e00000', 1.3) + seg(2101, 2105, 404.5, '#0000f0', 1.3);

for (const b of blocks) {
  const [ox, oy, sx, sy] = b.o;
  for (const row of b.k.split(';')) {
    const v = row.split(' '), t = v[5];
    const x = Math.round(ox + v[0] / sx), [h, a, z, l] = v.slice(1, 5).map(n => Math.round((oy + n / sy) * 2) / 2);
    const c = ink[t], bh = Math.max(z - a, 1.5);
    if (t === 'r') {
      out += rect(x - .7, h, 1.4, Math.max(a - h, 0), c) + rect(x - .7, z, 1.4, Math.max(l - z, 0), c);
      out += `<rect x="${x - 1.5}" y="${a + .5}" width="3" height="${Math.max(bh - 1, 1)}" fill="none" stroke="${c}" stroke-width="1.2"/>`;
    } else {
      out += rect(x - .7, h, 1.4, l - h, t === 'y' ? ink.r : c) + rect(x - 2, a, 4, bh, c);
    }
  }
}
for (const [color, parts] of averages) {
  const pts = parts.map((p, i) => p.split(' ').map(q => {
    const [x, y] = q.split(','), o = blocks[i].o;
    return (o[0] + x / o[2]).toFixed(1) + ',' + (o[1] + y / o[3]).toFixed(1);
  }).join(' ')).join(' ');
  out += `<polyline points="${pts}" fill="none" stroke="${color}" stroke-width="1.300"/>`;
}
out += '<path d="M3 452.500H157V451H400V449.500H453V448.500H552V446.500H2102" fill="none" stroke="#e800e8" stroke-width="1.500"/>';

// Signal blocks.
for (const [x, y, w, h, f] of [[88,293,14,6,'#ff6699'],[141,281,13,6,'#ff33ff'],[75,314,13,5,'#f00'],[108,326,14,6,'#ff0'],
  [450,170,13,7,'#f00'],[464,189,13,7,'#ff6699'],[516,335,13,5,'#ff33ff'],[483,360,14,6,'#ff0'],
  [747,414,14,4,'#ff6699'],[733,434,14,4,'#f00'],[767,461,13,4,'#ff0'],[800,410,13,4,'#ff33ff'],[872,414,13,4,'#f00'],[891,382,14,7,'#f00'],
  [905,365,13,4,'#ff6699'],[924,405,13,4,'#ff0'],[957,407,13,4,'#ff33ff'],[804,411,2,2,'#000'],[807,411,3,1,'#000']]) out += rect(x, y, w, h, f);

// High / low pointers and the dividend mark.
out += '<path d="M457 67h-6v6M452 69l5 2 3 1 8 3" fill="none" stroke="#b8b8b8" stroke-width="1.300"/>';
out += '<path d="M797 460H780M785 456l-5 4 5 4" fill="none" stroke="#b8b8b8" stroke-width="1.300"/>';
out += '<path d="M1392 470l4.500-4 4.500 4z" fill="#f00"/><path d="M1400 474.500c-1-2-7-2-7 .5 0 3 7 2 7 5 0 3-6 3-7.500 1" fill="none" stroke="#f00" stroke-width="2.200"/>';
kline.innerHTML = out;

// Price axis: y offsets inside the pane, with retracement percentages beneath.
let ax = '';
for (const [y, p, q] of [[107.5,'10.12','80.9%'],[184.5,'8.79','61.8%'],[230.5,'7.97'],[277.5,'7.15','38.2%'],[354,'5.82','19.1%'],[430.5,'4.49']]) {
  ax += seg(0, 8, y, '#606060', 1.5) + `<text x="67" y="${y + 7}">${p}</text>` + (q ? `<text x="67" y="${y + 23.5}">${q}</text>` : '');
}
axisMain.innerHTML = ax;

// Signal pane: 0 to 50 scale.
let low = '', sc = '';
for (let i = 0; i < 10; i++) {
  const y = 515.5 + i * 67.2, pc = n => ((n - 488) / 699 * 100).toFixed(2) + '%';
  if (i) low += seg(2, 2125, y, '#505050', 1.3, dots);
  sc += `<line x1="0" x2="7" y1="${pc(y)}" y2="${pc(y)}" stroke="#606060" stroke-width="1.500"/><line x1="0" x2="3" y1="${pc(y + 33.6)}" y2="${pc(y + 33.6)}" stroke="#606060"/>`;
  sc += `<text x="66" y="${pc(y)}" dy="7">${(50 - i * 5).toFixed(2)}</text>`;
}
low += rect(2099, 515, 7, 672, '#f0f');
signal.innerHTML = low;
axisSub.innerHTML = sc;
</script>
</body>
</html>
